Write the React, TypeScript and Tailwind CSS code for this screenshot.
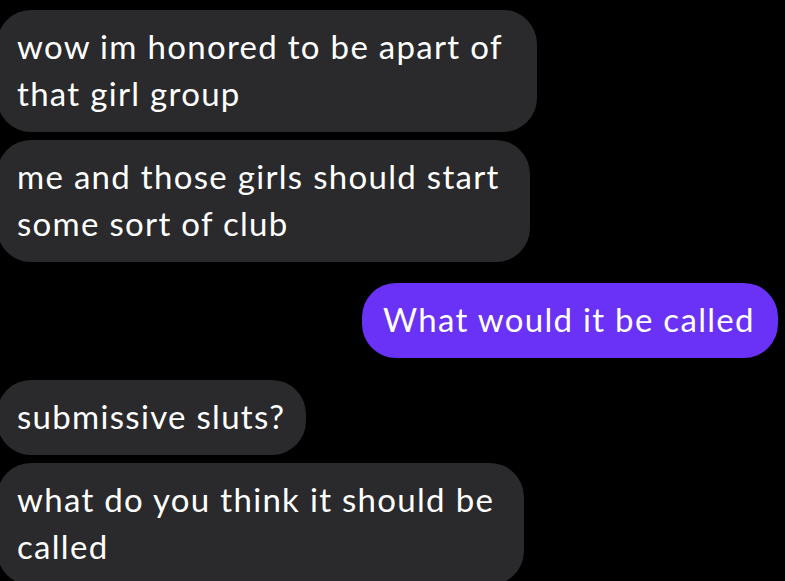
import React from 'react';

type Msg = { text: string; mine?: boolean; width: string; gap: string };

const messages: Msg[] = [
  { text: "wow im honored to be apart of that girl group", width: "w-[540px]", gap: "mt-[10px]" },
  { text: "me and those girls should start some sort of club", width: "w-[533px]", gap: "mt-[8px]" },
  { text: "What would it be called", mine: true, width: "w-[416px]", gap: "mt-[21px]" },
  { text: "submissive sluts?", width: "w-[309px]", gap: "mt-[22px]" },
  { text: "what do you think it should be called", width: "w-[527px]", gap: "mt-[8px]" },
];

const App = () => {
  return (
    <div className="w-[785px] h-[581px] bg-black overflow-hidden font-['Lato','Noto_Sans',sans-serif] text-white">
      <div className="flex flex-col pr-[7px]">
        {messages.map((m, i) => (
          <div
            key={i}
            className={`${m.gap} ${m.width} rounded-[34px] pt-[13px] pb-[15px] text-[33px] leading-[47px] tracking-[1.3px] ${
              m.mine
                ? "self-end bg-[#6a31f6] pl-[21px] pr-[6px]"
                : "self-start -ml-[3px] bg-[#2a2a2c] pl-[20px] pr-[6px]"
            }`}
          >
            {m.text}
          </div>
        ))}
      </div>
    </div>
  );
};

export default App;
